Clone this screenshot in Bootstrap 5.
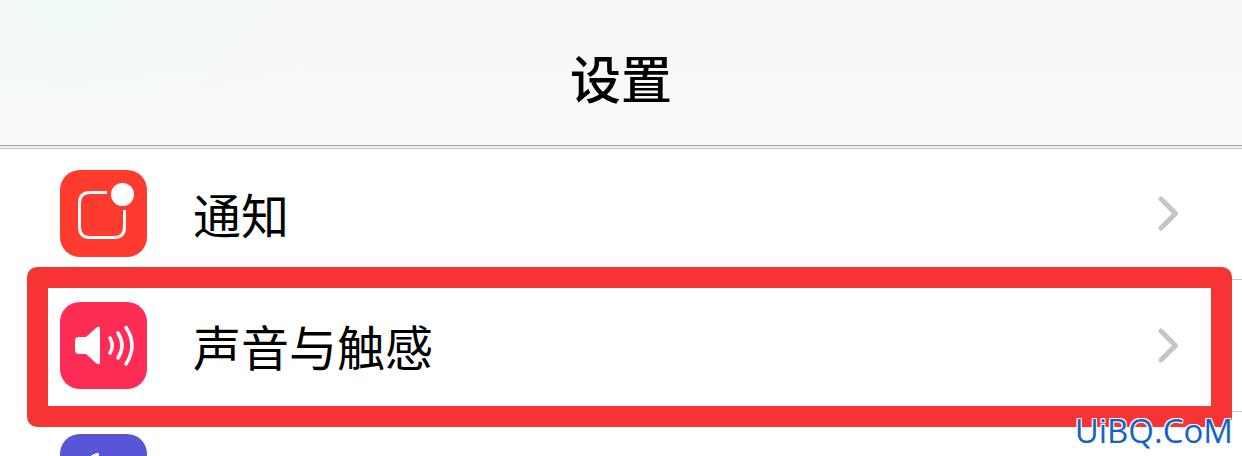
<!DOCTYPE html>
<html lang="zh-CN">
<head>
<meta charset="utf-8">
<meta name="viewport" content="width=device-width, initial-scale=1">
<title>设置</title>
<link href="https://cdn.jsdelivr.net/npm/bootstrap@5.3.0/dist/css/bootstrap.min.css" rel="stylesheet">
<style>
  body { font-family: "Noto Sans CJK SC", sans-serif; color: #000; background: #fff; }
  .title-bar {
    height: 149px;
    padding-top: 4px;
    background:
      linear-gradient(#a5a2ae, #a5a2ae) 0 145px / 100% 1px no-repeat,
      linear-gradient(#c5c4cf, #c5c4cf) 0 148px / 100% 1px no-repeat,
      linear-gradient(#f0eff5, #f0eff5) 0 146px / 100% 2px no-repeat,
      radial-gradient(ellipse 300px 150px at 70px 0, #f1fbf5, transparent),
      linear-gradient(#f6f6f6, #f9f9fb 60%, #fafafc);
  }
  .title-bar h1 { font-size: 51px; line-height: 72px; font-weight: 500; }
  .setting-row { height: 132px; padding: 0 60px 4px; color: #000; font-size: 48px; line-height: 72px; }
  .setting-row:hover { color: #000; }
  .setting-row::after { content: ""; position: absolute; left: 193px; right: 0; bottom: 1px; height: 1px; background: #c8c7cc; }
  .tile { width: 87px; height: 87px; border-radius: 20px; margin-right: 46px; }
  .tile-notice { background: #ff3b30; }
  .tile-sound { background: #ff2d55; }
  .tile-focus { background: #5856d6; }
  .highlight-box { position: absolute; z-index: 1; inset: -14px 10px -14px 27px; border: 21px solid #f73434; border-radius: 10px; pointer-events: none; }
  .watermark {
    position: absolute; z-index: 2; right: 9px; bottom: 4px;
    font-family: "Open Sans", sans-serif; font-size: 33px; line-height: 42px; font-weight: 500; color: #1464c8;
    text-shadow: 1px 1px #fff, -1px -1px #fff, 1px -1px #fff, -1px 1px #fff;
  }
</style>
</head>
<body>
<div class="position-relative vh-100 overflow-hidden">
  <header class="title-bar d-flex align-items-center justify-content-center">
    <h1 class="m-0">设置</h1>
  </header>
  <main class="d-flex flex-column">
    <a href="#notifications" class="setting-row position-relative d-flex align-items-center text-decoration-none">
      <svg class="tile tile-notice flex-shrink-0" viewBox="0 0 87 87" fill="none" aria-hidden="true">
        <path d="M47 22.500H30Q19.500 22.500 19.500 33V57Q19.500 67.500 30 67.500H54Q64.500 67.500 64.500 57V40" stroke="#fff" stroke-width="3"/>
        <circle cx="62.500" cy="24.500" r="11.500" fill="#fff"/>
      </svg>
      <span class="flex-grow-1">通知</span>
      <svg width="24" height="36" viewBox="0 0 24 36" fill="none" stroke="#c5c5c7" stroke-width="5" stroke-linecap="round" stroke-linejoin="round" aria-hidden="true"><path d="M3 4 17.500 18.500 3 33"/></svg>
    </a>
    <a href="#sounds" class="setting-row position-relative d-flex align-items-center text-decoration-none">
      <svg class="tile tile-sound flex-shrink-0" viewBox="0 0 87 87" fill="none" aria-hidden="true">
        <path d="M19 35H26L36 26Q40 23 40 27V60Q40 64 36 61L26 52H19Q15 52 15 48V39Q15 35 19 35Z" fill="#fff"/>
        <path d="M50 36Q54.500 43.500 50 51M58 31Q66 43.500 58 56M66 25.500Q78 43.500 66 62" stroke="#fff" stroke-width="3.500" stroke-linecap="round"/>
      </svg>
      <span class="flex-grow-1">声音与触感</span>
      <svg width="24" height="36" viewBox="0 0 24 36" fill="none" stroke="#c5c5c7" stroke-width="5" stroke-linecap="round" stroke-linejoin="round" aria-hidden="true"><path d="M3 4 17.500 18.500 3 33"/></svg>
      <span class="highlight-box"></span>
    </a>
    <a href="#focus" class="setting-row position-relative d-flex align-items-center text-decoration-none" aria-label="勿扰模式">
      <svg class="tile tile-focus flex-shrink-0" viewBox="0 0 87 87" aria-hidden="true">
        <path d="M37 19C22 24 15 39 20 53C27 72 54 75 66 57C46 62 32 41 39 21Q39 18 37 19Z" fill="#fff"/>
      </svg>
    </a>
  </main>
  <div class="watermark">UiBQ.CoM</div>
</div>
<script src="https://cdn.jsdelivr.net/npm/bootstrap@5.3.0/dist/js/bootstrap.bundle.min.js"></script>
</body>
</html>
